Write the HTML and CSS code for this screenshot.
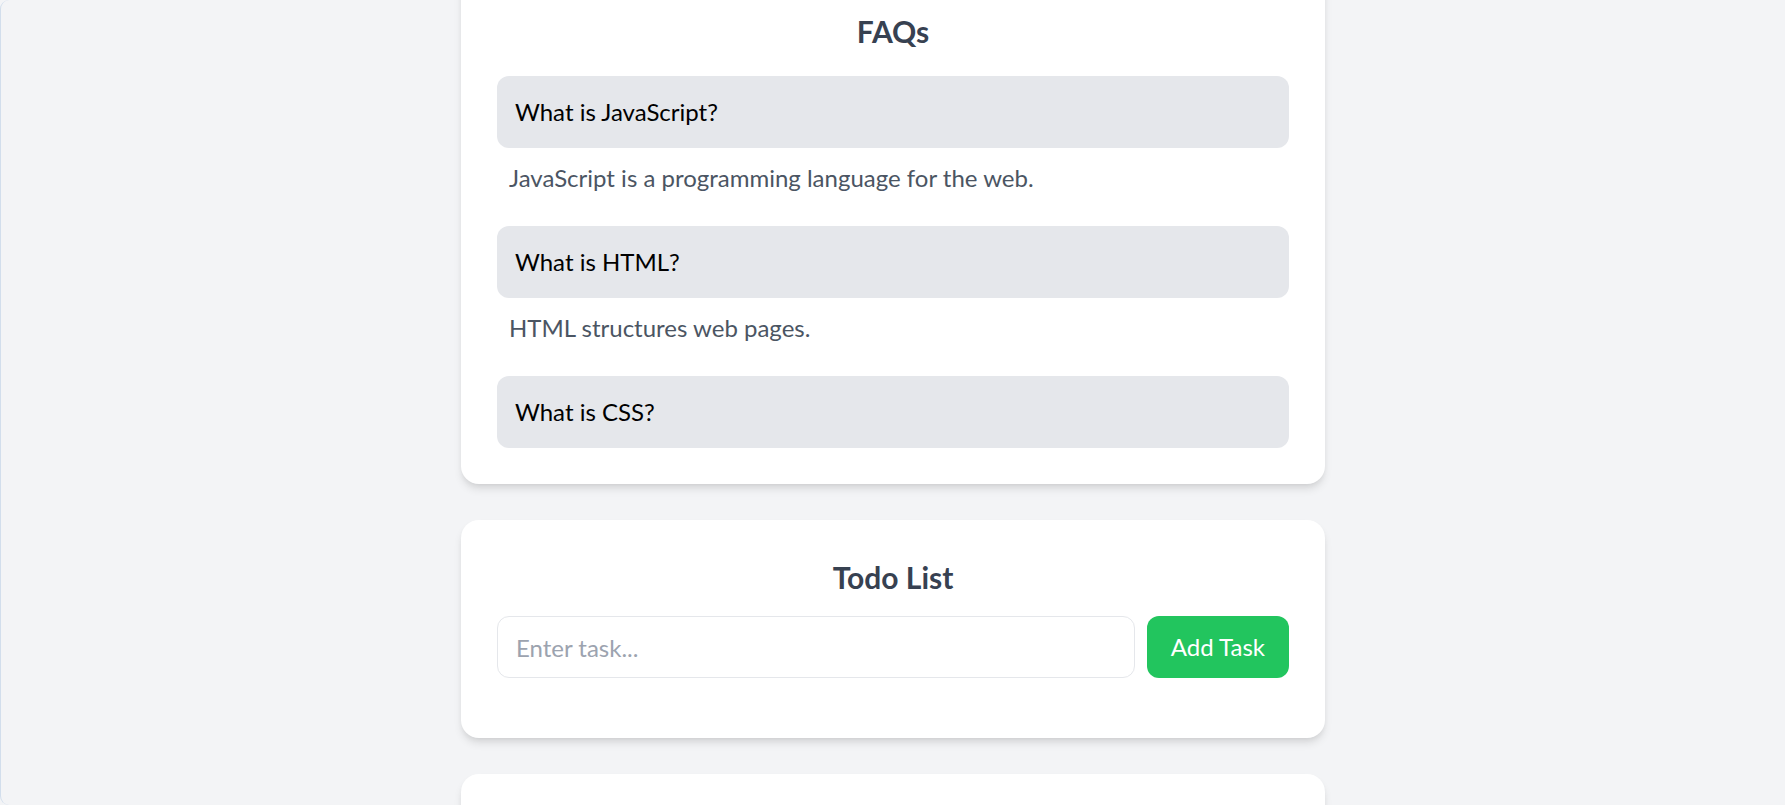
FILE: index.html
```html
<!DOCTYPE html>
<html lang="en">
<head>
<meta charset="utf-8">
<title>FAQs and Todo List</title>
<link rel="stylesheet" href="styles.css">
</head>
<body>
<div class="viewport">
  <main class="page">
    <section class="card faq-card">
      <h2 class="card-title faq-title">FAQs</h2>
      <div class="faq-list">
        <div class="faq-item">
          <button class="faq-question" type="button">What is JavaScript?</button>
          <div class="faq-answer">JavaScript is a programming language for the web.</div>
        </div>
        <div class="faq-item">
          <button class="faq-question" type="button">What is HTML?</button>
          <div class="faq-answer">HTML structures web pages.</div>
        </div>
        <div class="faq-item">
          <button class="faq-question" type="button">What is CSS?</button>
        </div>
      </div>
    </section>

    <section class="card todo-card">
      <h2 class="card-title todo-title">Todo List</h2>
      <div class="todo-form">
        <input class="todo-input" type="text" placeholder="Enter task...">
        <button class="todo-add" type="button">Add Task</button>
      </div>
      <ul class="todo-list"></ul>
    </section>

    <section class="card next-card"></section>
  </main>
</div>
</body>
</html>
```
FILE: styles.css
```css
html, body {
  margin: 0;
  padding: 0;
}

body {
  background: #f3f4f6;
  font-family: Lato, "Open Sans", Arial, sans-serif;
  overflow: hidden;
}

.viewport {
  box-sizing: border-box;
  height: 805px;
  overflow: hidden;
  border-left: 1.5px solid #d2deec;
  border-radius: 9px 0 0 9px;
  background: #f3f4f6;
}

.page {
  display: flex;
  flex-direction: column;
  align-items: center;
  gap: 36px;
  margin-top: -26px;
}

.card {
  box-sizing: border-box;
  width: 864px;
  padding: 36px;
  background: #ffffff;
  border-radius: 18px;
  box-shadow: 0 6px 9px -1.5px rgba(0, 0, 0, 0.1), 0 3px 6px -3px rgba(0, 0, 0, 0.1);
}

.card-title {
  margin: 0;
  font-size: 30px;
  line-height: 42px;
  font-weight: 700;
  color: #374151;
  text-align: center;
}

.faq-title {
  margin-bottom: 24px;
}

.todo-title {
  margin-bottom: 18px;
}

.faq-list {
  display: flex;
  flex-direction: column;
  gap: 18px;
}

.faq-question {
  display: block;
  width: 100%;
  box-sizing: border-box;
  padding: 18px 18px;
  border: 0;
  border-radius: 12px;
  background: #e5e7eb;
  color: #000000;
  font-family: inherit;
  font-size: 24px;
  line-height: 36px;
  text-align: left;
  cursor: pointer;
}

.faq-answer {
  padding: 12px;
  font-size: 24px;
  line-height: 36px;
  color: #4b5563;
}

.todo-form {
  display: flex;
  gap: 12px;
}

.todo-input {
  flex: 1;
  min-width: 0;
  box-sizing: border-box;
  height: 62px;
  padding: 12px 18px;
  border: 1.5px solid #e5e7eb;
  border-radius: 12px;
  font-family: inherit;
  font-size: 24px;
  line-height: 36px;
  color: #111827;
  outline: none;
}

.todo-input::placeholder {
  color: #9ca3af;
}

.todo-add {
  box-sizing: border-box;
  height: 62px;
  padding: 0 24px;
  border: 0;
  border-radius: 12px;
  background: #22c55e;
  color: #ffffff;
  font-family: inherit;
  font-size: 24px;
  line-height: 36px;
  cursor: pointer;
}

.todo-list {
  margin: 24px 0 0;
  padding: 0;
  list-style: none;
}

.next-card {
  min-height: 200px;
}
```
